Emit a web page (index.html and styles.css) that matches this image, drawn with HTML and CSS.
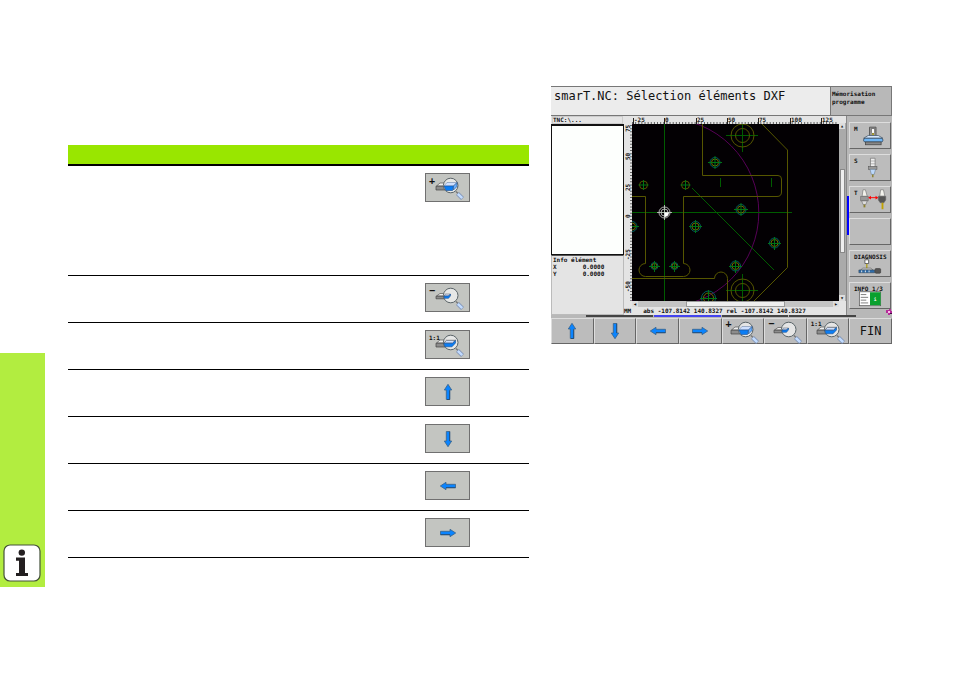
FILE: index.html
```html
<!DOCTYPE html>
<html lang="fr">
<head>
<meta charset="utf-8">
<meta name="viewport" content="width=device-width, initial-scale=1">
<title>smarT.NC: Sélection éléments DXF</title>
<link rel="stylesheet" href="styles.css">
</head>
<body>
<svg class="defs" aria-hidden="true">
  <symbol id="arrow-up" viewBox="0 0 16 16">
    <path d="M8 0.3 L11.7 6 H9.7 V15.5 H6.3 V6 H4.3 Z" fill="#0a84ff" stroke="#3a6288" stroke-width="0.8"/>
    <path d="M9.7 6.5V15.5H7" fill="none" stroke="#14406e" stroke-width="0.7"/>
  </symbol>
  <symbol id="arrow-down" viewBox="0 0 16 16">
    <path d="M8 15.7 L11.7 10 H9.7 V0.5 H6.3 V10 H4.3 Z" fill="#0a84ff" stroke="#3a6288" stroke-width="0.8"/>
    <path d="M9.7 0.5V10" fill="none" stroke="#14406e" stroke-width="0.7"/>
  </symbol>
  <symbol id="arrow-left" viewBox="0 0 16 16">
    <path d="M0.3 8 L6 4.3 V6.3 H15.5 V9.7 H6 V11.7 Z" fill="#0a84ff" stroke="#3a6288" stroke-width="0.8"/>
    <path d="M6 9.7H15.5" fill="none" stroke="#14406e" stroke-width="0.7"/>
  </symbol>
  <symbol id="arrow-right" viewBox="0 0 16 16">
    <path d="M15.7 8 L10 4.3 V6.3 H0.5 V9.7 H10 V11.7 Z" fill="#0a84ff" stroke="#3a6288" stroke-width="0.8"/>
    <path d="M0.5 9.7H10" fill="none" stroke="#14406e" stroke-width="0.7"/>
  </symbol>
  <symbol id="lens" viewBox="0 0 45 29">
    <path d="M31 18.5 L33 20.5" stroke="#777" stroke-width="1.5"/>
    <path d="M32.5 20.5 L37.5 25.5" stroke="#7f93b5" stroke-width="4"/>
    <path d="M32.8 20.8 L37.2 25.2" stroke="#c3dcff" stroke-width="2.6"/>
    <circle cx="25.7" cy="12.5" r="7.3" fill="#ececec" fill-opacity="0.85" stroke="#5a6468" stroke-width="1"/>
  </symbol>
  <symbol id="zoom-in" viewBox="0 0 45 29">
    <path d="M11.5 13 L15 10 H22 V13 Z" fill="#eee" stroke="#555" stroke-width="0.7"/>
    <path d="M11 13.2 H20 V17 H11 Z" fill="#8c8c8c" stroke="#444" stroke-width="0.7"/>
    <use href="#lens" width="45" height="29"/>
    <path d="M18.8 13 L22 9.5 H32 L28.5 13 Z" fill="#cfe0ff" stroke="#7186a8" stroke-width="0.6"/>
    <path d="M19 13 H28.5 L27.5 17.5 H21 Z" fill="#0a7df5" stroke="#1c4f8f" stroke-width="0.6"/>
    <path d="M28.5 13 L32 9.5 V13.5 L28.5 17 Z" fill="#6aaefc" stroke="#1c4f8f" stroke-width="0.6"/>
  </symbol>
  <symbol id="zoom-out" viewBox="0 0 45 29">
    <path d="M11.5 13 L15 10.5 H21 V13 Z" fill="#eee" stroke="#555" stroke-width="0.7"/>
    <path d="M11 13.2 H20 V15.8 H11 Z" fill="#8c8c8c" stroke="#444" stroke-width="0.7"/>
    <use href="#lens" width="45" height="29"/>
    <path d="M19 13 L20.5 11 H25.5 L23.5 13 Z" fill="#cfe0ff" stroke="#555" stroke-width="0.5"/>
    <path d="M19 13 H23.5 L25.5 11 V12.8 L23.5 15.3 H19.3 Z" fill="#0a7df5" stroke="#1c4f8f" stroke-width="0.6"/>
  </symbol>
  <symbol id="zoom-fit" viewBox="0 0 45 29">
    <path d="M11.5 13 L15 10 H22 V13 Z" fill="#eee" stroke="#555" stroke-width="0.7"/>
    <path d="M11 13.2 H20 V17 H11 Z" fill="#8c8c8c" stroke="#444" stroke-width="0.7"/>
    <use href="#lens" width="45" height="29"/>
    <path d="M18.6 13.2 L21.5 10.3 H30.5 L27.5 13.2 Z" fill="#cfe0ff" stroke="#333" stroke-width="0.6"/>
    <path d="M18.8 13.2 H27.5 L30.5 10.3 V13 L27 16.8 H20 Z" fill="#0a7df5" stroke="#1c4f8f" stroke-width="0.6"/>
  </symbol>
</svg>

<main class="page">
  <aside class="tab">
    <svg class="info" viewBox="0 0 38 38" role="img" aria-label="Info">
      <rect x="1" y="1" width="36" height="36" rx="6" fill="#fff" stroke="#45523a" stroke-width="1.2"/>
      <circle cx="18.8" cy="8.6" r="3.2" fill="#231f20"/>
      <path d="M13 13.5 H22 V29 H25 V32 H13 V29 H16 V16.8 H13 Z" fill="#231f20"/>
    </svg>
  </aside>

  <table class="functions">
    <thead><tr><th></th><th></th></tr></thead>
    <tbody>
      <tr class="tall"><td></td><td><span class="key"><svg class="zoom" role="img" aria-label="Agrandir"><use href="#zoom-in"/></svg><b class="sign">+</b></span></td></tr>
      <tr><td></td><td><span class="key"><svg class="zoom" role="img" aria-label="Réduire"><use href="#zoom-out"/></svg><b class="sign">−</b></span></td></tr>
      <tr><td></td><td><span class="key"><svg class="zoom" role="img" aria-label="Taille réelle"><use href="#zoom-fit"/></svg><b class="sign ratio">1:1</b></span></td></tr>
      <tr><td></td><td><span class="key"><svg class="arrow" role="img" aria-label="Haut"><use href="#arrow-up"/></svg></span></td></tr>
      <tr><td></td><td><span class="key"><svg class="arrow" role="img" aria-label="Bas"><use href="#arrow-down"/></svg></span></td></tr>
      <tr><td></td><td><span class="key"><svg class="arrow" role="img" aria-label="Gauche"><use href="#arrow-left"/></svg></span></td></tr>
      <tr><td></td><td><span class="key"><svg class="arrow" role="img" aria-label="Droite"><use href="#arrow-right"/></svg></span></td></tr>
    </tbody>
  </table>

  <section class="screen">
    <header class="top">
      <h1>smarT.NC: Sélection éléments DXF</h1>
      <p class="mode">Mémorisation programme</p>
    </header>

    <div class="work">
      <div class="side">
        <div class="path">TNC:\...</div>
        <div class="files"></div>
        <div class="element">
          <p>Info élément</p>
          <p class="coord"><span>X</span><span>0.0000</span></p>
          <p class="coord"><span>Y</span><span>0.0000</span></p>
        </div>
      </div>

      <div class="viewer">
        <svg class="rulers" viewBox="624 116 215 185" preserveAspectRatio="none">
          <rect x="624" y="116" width="215" height="185" fill="#e4e4e4"/>
          <path d="M632 123 H838" stroke="#333" stroke-width="1.4" stroke-dasharray="1 2.13"/>
          <path d="M631 125 V301" stroke="#333" stroke-width="1.4" stroke-dasharray="1 2.13"/>
          <path d="M633.5 118v6M664.5 118v6M696.5 118v6M727.5 118v6M758.5 118v6M790.5 118v6M821.5 118v6" stroke="#222"/>
          <g class="scale">
            <text x="634" y="122">-25</text><text x="665" y="122">0</text><text x="697" y="122">25</text><text x="728" y="122">50</text><text x="759" y="122">75</text><text x="791" y="122">100</text><text x="822" y="122">125</text>
            <text transform="translate(630 132) rotate(-90)">75</text><text transform="translate(630 160) rotate(-90)">50</text><text transform="translate(630 191) rotate(-90)">25</text><text transform="translate(630 218) rotate(-90)">0</text><text transform="translate(630 260) rotate(-90)">-25</text><text transform="translate(630 292) rotate(-90)">-50</text>
          </g>
          <rect x="632" y="124" width="207" height="177" fill="#030003"/>
          <svg x="632" y="124" width="207" height="177" viewBox="632 124 207 177" fill="none">
            <circle cx="664.5" cy="212.5" r="94.3" stroke="#560056"/>
            <g stroke="#005c00">
              <path d="M664.5 124V301M632 212.5H792M692 188L774 270M720.5 178V187M771.5 178V187"/>
              <path d="M726 135.5H758M742.5 120V152M726 290.5H758M742.5 274V301"/>
            </g>
            <g stroke="#565600">
              <path d="M762 124L787.5 150V267.5L754 301"/>
              <path d="M702.5 124V175.5H778Q781.5 175.5 781.5 179V192Q781.5 196.5 777 196.5H683.5V263.5A6.5 6.5 0 0 1 683.5 276.5H645.5A6.5 6.5 0 0 1 645.5 263.5V196.5H632"/>
              <path d="M632 278.5H714.5A6.3 6.3 0 0 1 727.5 278.5V301"/>
              <circle cx="742.5" cy="135.5" r="11.5"/><circle cx="742.5" cy="135.5" r="7"/>
              <circle cx="742.5" cy="290.5" r="11.5"/><circle cx="742.5" cy="290.5" r="7"/>
              <circle cx="643.5" cy="185" r="4"/><circle cx="685.5" cy="185" r="4"/>
            </g>
            <path stroke="#007414" d="M638.5 185H648.5M643.5 180V190M680.5 185H690.5M685.5 180V190"/>
            <g stroke="#005c5c"><circle cx="715" cy="162.5" r="5"/><circle cx="741" cy="209.5" r="5"/><circle cx="632" cy="226.5" r="5"/><circle cx="695.5" cy="226.5" r="5"/><circle cx="774.5" cy="243" r="5"/><circle cx="735.5" cy="266" r="5"/><circle cx="654.5" cy="266" r="3.5"/><circle cx="674.5" cy="266" r="3.5"/><circle cx="708.5" cy="298" r="7"/></g>
            <g stroke="#6c6c00"><circle cx="715" cy="162.5" r="3.5"/><circle cx="741" cy="209.5" r="3.5"/><circle cx="632" cy="226.5" r="3.5"/><circle cx="695.5" cy="226.5" r="3.5"/><circle cx="774.5" cy="243" r="3.5"/><circle cx="735.5" cy="266" r="3.5"/><circle cx="654.5" cy="266" r="2.5"/><circle cx="674.5" cy="266" r="2.5"/><circle cx="708.5" cy="298" r="5"/></g>
            <path stroke="#007414" d="M708 162.5H722M715 156V169M734 209.5H748M741 203V216M632 226.5H639M689 226.5H702M695.5 220V233M768 243.5H781M774.5 237V250M729 266.5H742M735.5 260V273M649 266.5H660M654.5 261V272M669 266.5H680M674.5 261V272M700 298.5H717M708.5 290V301"/>
            <g stroke="#ddd" stroke-width=".8"><circle cx="664.5" cy="212.5" r="5.5"/><circle cx="664.5" cy="212.5" r="3.5"/><path d="M657 212.5H672M664.5 205V220" stroke="#ccc"/><path d="M664.5 212.5H669A4.5 4.5 0 0 1 664.5 217Z" fill="#fff" stroke="none"/></g>
          </svg>
        </svg>
        <div class="vbar"><i>▴</i><span class="vthumb"></span><i>▾</i></div>
        <div class="hbar"><i>◂</i><span class="hthumb"></span><i>▸</i></div>
        <p class="status"><span>MM</span><span>abs -107.8142 140.8327 rel -107.8142 140.8327</span></p>
      </div>

      <nav class="modes">
        <button type="button"><span>M</span>
          <svg viewBox="0 0 42 27"><path d="M20.5 4.5H27.5V14H20.5Z" fill="#999" stroke="#555"/><path d="M22.5 6H26V10L24.3 12 22.5 10Z" fill="#fff" stroke="#444" stroke-width=".7"/><path d="M24.3 11v2" stroke="#b9a600" stroke-width="1.5"/><path d="M19 13.5H30L35 16.5H14Z" fill="#d5e8ff" stroke="#456" stroke-width=".8"/><rect x="14" y="16.500" width="21" height="4" rx="2" fill="#6db5f5" stroke="#345" stroke-width=".8"/><rect x="16" y="20.500" width="17" height="3" fill="#888" stroke="#444" stroke-width=".8"/></svg></button>
        <button type="button"><span>S</span>
          <svg viewBox="0 0 42 27"><path d="M21.5 3.5H26.5V13H21.5Z" fill="#eee" stroke="#777" stroke-width=".8"/><path d="M21 6.5H27M21 9.500H27" stroke="#888" stroke-width=".6"/><rect x="19.500" y="12.500" width="9" height="3" fill="#999" stroke="#555" stroke-width=".6"/><path d="M21 15.500H27L25.500 21H22.500Z" fill="#bcd8fa" stroke="#678" stroke-width=".6"/><path d="M24 21V24" stroke="#8d812f" stroke-width="1.600"/></svg></button>
        <button type="button"><span>T</span>
          <svg viewBox="0 0 42 27"><g stroke="#666" stroke-width=".6"><path d="M12.500 10L13.500 3H16L18 10Z" fill="#f2f2ec"/><rect x="11" y="10" width="8" height="5" fill="#999"/><path d="M12 15H18L16.500 19H13.500Z" fill="#ddd"/><path d="M31.500 10L32.500 3H35.500L37 10Z" fill="#f2f2ec"/><path d="M30 10H38V14L36 17H32L30 14Z" fill="#555"/></g><path d="M15 19V22" stroke="#8d812f" stroke-width="2"/><path d="M34.500 17V24" stroke="#c2a200" stroke-width="2"/><path d="M21 11.500H28" stroke="#f00"/><path d="M19 11.500L22 9.500V13.500ZM30 11.500L27 9.500V13.500Z" fill="#f00"/></svg></button>
        <button type="button" aria-label="Libre"></button>
        <button type="button"><span>DIAGNOSIS</span>
          <svg viewBox="0 0 42 27"><path d="M15.500 9.500H19.500V13.500H15.500Z" fill="#fff" stroke="#444" stroke-width=".8"/><path d="M17.500 14V19" stroke="#b2a32d" stroke-width="1.600"/><path d="M13 18.500H22L24 20.500H11Z" fill="#eee" stroke="#555" stroke-width=".7"/><path d="M9 20.500H26V23.500H9Z" fill="#2e6dab" stroke="#345" stroke-width=".6"/><path d="M12 21v2M16 21v2M20 21v2" stroke="#eee"/><rect x="26.500" y="19" width="6" height="5" rx="1" fill="#555" stroke="#333" stroke-width=".6"/></svg></button>
        <button type="button"><span>INFO 1/3</span>
          <svg viewBox="0 0 42 27"><rect x="9.500" y="9.500" width="23" height="15" fill="#fff" stroke="#555" stroke-width=".8"/><path d="M11 12.500h6M11 15.500h8M11 18.500h6M11 21.500h8" stroke="#555" stroke-width=".8"/><rect x="21" y="10" width="11.500" height="14" fill="#0aa02e"/><text x="25" y="19" class="tiny">i</text></svg></button>
        <svg class="flag" viewBox="0 0 6 6"><path d="M0 1h3V0h2v2h1v3H4v1H2V4H0Z" fill="#b52c9a"/><path d="M2 2h2v2H2Z" fill="#ffb9e8"/><path d="M4 4h2v1H4Z" fill="#404"/></svg>
      </nav>
    </div>

    <div class="levels"><span></span><span class="on"></span><span></span><span></span></div>
    <div class="softkeys">
      <button type="button" aria-label="Haut"><svg class="arrow"><use href="#arrow-up"/></svg></button>
      <button type="button" aria-label="Bas"><svg class="arrow"><use href="#arrow-down"/></svg></button>
      <button type="button" aria-label="Gauche"><svg class="arrow"><use href="#arrow-left"/></svg></button>
      <button type="button" aria-label="Droite"><svg class="arrow"><use href="#arrow-right"/></svg></button>
      <button type="button"><svg class="zoom"><use href="#zoom-in"/></svg><b class="sign">+</b></button>
      <button type="button"><svg class="zoom"><use href="#zoom-out"/></svg><b class="sign">−</b></button>
      <button type="button"><svg class="zoom"><use href="#zoom-fit"/></svg><b class="sign ratio">1:1</b></button>
      <button type="button" class="end">FIN</button>
    </div>
  </section>
</main>
</body>
</html>
```
FILE: styles.css
```css
* { box-sizing: border-box; }

body {
  margin: 0;
  background: #fff;
  color: #111;
  font: 6px/7px "DejaVu Sans Mono", monospace;
}

h1, p { margin: 0; }
svg { display: block; }
.defs { position: absolute; width: 0; height: 0; }

.page {
  display: grid;
  grid-template-columns: 45px minmax(0, 484fr) minmax(0, 363fr);
  align-items: start;
  padding: 86px 62px 86px 0;
}

/* Chapter tab on the page edge */
.tab {
  display: flex;
  flex-direction: column;
  justify-content: flex-end;
  align-self: end;
  min-height: 234px;
  padding: 0 3px 5px;
  background: #b2ed40;
}
.info { width: 38px; height: 38px; }

/* Function list */
.functions {
  width: calc(100% - 23px);
  margin: 59px 0 29px 23px;
  border-collapse: separate;
  border-spacing: 0;
}
.functions th { height: 21px; padding: 0; background: #99e600; border-bottom: 2px solid #000; }
.functions td {
  height: 47px;
  padding: 7px 0 0;
  vertical-align: top;
  border-bottom: 1px solid #000;
}
.functions .tall td { height: 110px; }
.functions td:last-child, .functions th:last-child { width: 104px; }
.key {
  display: flex;
  align-items: center;
  justify-content: center;
  position: relative;
  width: 45px;
  height: 29px;
  border: 1px solid #707070;
  background: #c3c5c1;
}
.arrow { width: 16px; height: 16px; }
.zoom { width: 45px; height: 29px; flex: none; }
.sign {
  position: absolute;
  left: 3px;
  top: 3px;
  font-size: 10px;
  line-height: 8px;
}
.ratio { font-size: 6px; }

/* Control screen */
.screen { margin-left: 22px; background: #b8b8b8; }
.top {
  display: flex;
  height: 30px;
  border: 1px solid #777;
  border-left: 0;
}
.top h1 {
  flex: 1;
  padding: 3px;
  background: #ececec;
  font-size: 12px;
  line-height: 12px;
  font-weight: 400;
  white-space: nowrap;
}
.mode {
  width: 61px;
  padding: 3px 1px;
  border-left: 1px solid #777;
  font-weight: 700;
  line-height: 8px;
}

.work { display: grid; grid-template-columns: 73fr 222fr 46fr; height: 199px; }
.side { display: flex; flex-direction: column; background: #e4e4e4; }
.path { height: 8px; margin: 0 1px; border: 1px solid #ccc; font-weight: 700; line-height: 6px; }
.files { height: 131px; background: #fdfffd; border: 1px solid #111; border-width: 2px 1px 1px; }
.element { flex: 1; padding: 0 1px; border: 1px solid #bbb; border-top-color: #555; font-weight: 700; }
.coord { display: flex; gap: 26px; }

.viewer {
  display: grid;
  grid-template-columns: 1fr 7px;
  grid-template-rows: 185px 6px 8px;
  background: #e4e4e4;
}
.rulers { width: 100%; height: 100%; }
.scale { font-size: 6px; font-weight: 700; fill: #222; }
.vbar {
  display: flex;
  flex-direction: column;
  margin-top: 7px;
  background: #aaa;
}
.vthumb { flex: 1; margin: 40px 1px 42px; border: 1px solid #888; background: #eee; }
.vbar i, .hbar i { width: 6px; height: 6px; background: #ddd; font-style: normal; line-height: 6px; text-align: center; }
.hbar { display: flex; margin-left: 8px; background: #eee; }
.hthumb { flex: 1; margin: 0 48px; border: 1px solid #999; background: #eee; }
.hbar { background: #c4c4c4; }
.status { grid-column: 1 / -1; display: flex; gap: 12px; font-weight: 700; line-height: 8px; white-space: nowrap; }

.modes {
  position: relative;
  display: flex;
  flex-direction: column;
  gap: 5px;
  padding: 6px 1px 0 2px;
  border-left: 1px solid #888;
}
.modes::before { content: ""; position: absolute; left: 0; top: 80px; width: 2px; height: 39px; background: #00f; }
button {
  position: relative;
  padding: 0;
  background: #bcbcbc;
  border: 1px solid;
  border-color: #ddd #666 #666 #ddd;
  color: #111;
  font: inherit;
}
.modes button { height: 27px; font-weight: 700; }
.modes button span { position: absolute; left: 4px; top: 2px; }
.modes button svg { width: 100%; height: 100%; }
.tiny { font-size: 5px; fill: #fff; }
.flag { position: absolute; right: 0; bottom: 0; width: 6px; height: 6px; }

.levels { display: flex; gap: 1px; height: 3px; padding: 0 36px 1px 35px; }
.levels span { flex: 1; background: #444; }
.levels .on { background: #44e; }
.softkeys { display: grid; grid-template-columns: repeat(8, 1fr); grid-auto-rows: 26px; }
.softkeys button {
  display: flex;
  align-items: center;
  justify-content: center;
  min-width: 0;
}
.softkeys .sign { top: 1px; }
.softkeys .end { font-size: 12px; }
```
